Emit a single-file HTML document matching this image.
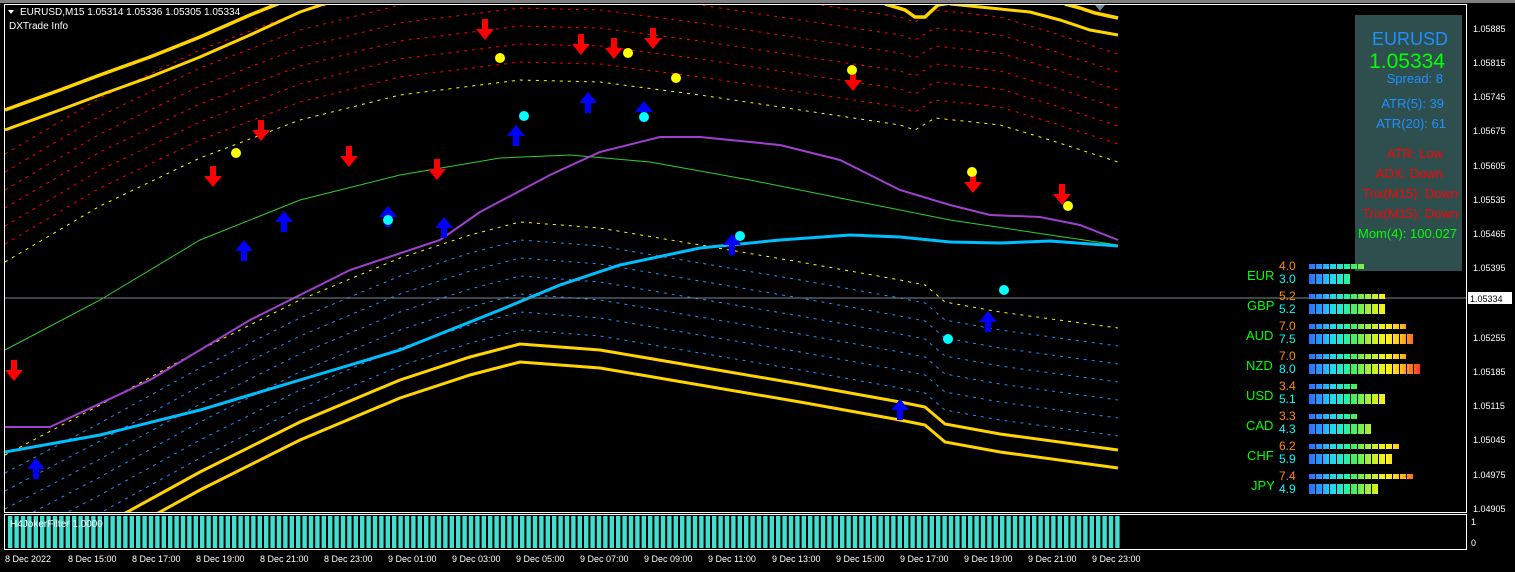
<!DOCTYPE html>
<html><head><meta charset="utf-8"><style>
html,body{margin:0;padding:0;background:#000;width:1515px;height:572px;overflow:hidden;font-family:"Liberation Sans",sans-serif}
svg{position:absolute;left:0;top:0}
</style></head><body>
<svg width="1515" height="572" viewBox="0 0 1515 572" xmlns="http://www.w3.org/2000/svg" font-family="Liberation Sans, sans-serif">
<defs>
<clipPath id="c"><rect x="5" y="5" width="1461" height="507"/></clipPath>
<path id="P" d="M5,262 L100,206 L200,158 L300,120 L400,95 L520,80 L600,82 L700,95 L800,110 L900,125 L915,130 L935,118 L1000,125 L1050,140 L1118,162"/>
<path id="Q" d="M5,455 L100,405 L200,350 L300,300 L400,258 L470,235 L520,222 L600,228 L700,245 L800,262 L900,280 L925,285 L945,302 L1000,312 L1118,328"/>
<path id="dn" d="M-3,-12 L3,-12 L3,-2 L9,-2 L0,9 L-9,-2 L-3,-2 Z" fill="#f00"/>
<path id="up" d="M-3,12 L3,12 L3,2 L9,2 L0,-9 L-9,2 L-3,2 Z" fill="#00f"/>
<pattern id="bars" x="8" y="0" width="6.4" height="40" patternUnits="userSpaceOnUse"><rect width="4.4" height="40" fill="#40e0d0"/></pattern>
<linearGradient id="sg" gradientUnits="userSpaceOnUse" x1="1309" y1="0" x2="1421" y2="0">
<stop offset="0" stop-color="#2a6fff"/><stop offset="0.12" stop-color="#2aa0ff"/><stop offset="0.19" stop-color="#22d0ff"/><stop offset="0.31" stop-color="#22f0c0"/><stop offset="0.4" stop-color="#40f060"/><stop offset="0.5" stop-color="#90f040"/><stop offset="0.62" stop-color="#e0f020"/><stop offset="0.7" stop-color="#fff020"/><stop offset="0.82" stop-color="#ffc020"/><stop offset="0.9" stop-color="#ff8020"/><stop offset="1" stop-color="#ff3020"/>
</linearGradient>
<pattern id="gapw" x="1309" y="0" width="7" height="600" patternUnits="userSpaceOnUse"><rect width="6" height="600" fill="#fff"/></pattern>
<mask id="m" maskUnits="userSpaceOnUse" x="1300" y="255" width="130" height="250"><rect x="1300" y="255" width="130" height="250" fill="url(#gapw)"/></mask>
</defs>
<rect width="1515" height="572" fill="#000"/>
<rect x="0" y="0" width="1515" height="3" fill="#808080"/>
<g clip-path="url(#c)" fill="none">
<g stroke="#f00" stroke-width="1" stroke-dasharray="3 5">
<use href="#P" transform="translate(0,-18)"/><use href="#P" transform="translate(0,-36)"/><use href="#P" transform="translate(0,-54)"/><use href="#P" transform="translate(0,-72)"/><use href="#P" transform="translate(0,-90)"/><use href="#P" transform="translate(0,-108)"/>
</g>
<use href="#P" stroke="#ff0" stroke-dasharray="3 5"/>
<polyline stroke="#ffd400" stroke-width="3.5" points="5,110 60,90 100,75 150,57 200,37 250,15 280,3"/>
<polyline stroke="#ffd400" stroke-width="3" points="5,130 60,110 100,95 150,77 200,57 250,35 300,12 330,2"/>
<polyline stroke="#ffd400" stroke-width="3.5" points="885,4 905,10 915,17 925,17 938,5 950,3"/>
<polyline stroke="#ffd400" stroke-width="3.5" points="1065,4 1080,8 1095,13 1118,18"/>
<polyline stroke="#ffd400" stroke-width="3" points="950,4 990,8 1030,12 1060,20 1090,30 1118,35"/>
<g stroke="#1e90ff" stroke-width="1" stroke-dasharray="3 5">
<use href="#Q" transform="translate(0,18)"/><use href="#Q" transform="translate(0,36)"/><use href="#Q" transform="translate(0,54)"/><use href="#Q" transform="translate(0,72)"/><use href="#Q" transform="translate(0,90)"/><use href="#Q" transform="translate(0,108)"/>
</g>
<use href="#Q" stroke="#ff0" stroke-dasharray="3 5"/>
<use href="#Q" stroke="#ffd400" stroke-width="3" transform="translate(0,122)"/>
<use href="#Q" stroke="#ffd400" stroke-width="3" transform="translate(0,140)"/>
<polyline stroke="#32cd32" stroke-width="1" points="5,350 100,300 200,240 300,200 400,175 500,158 570,155 650,162 750,180 850,200 950,220 1050,235 1118,245"/>
<polyline stroke="#a040d0" stroke-width="2" points="5,427 50,427 150,380 250,320 350,270 440,240 480,212 550,175 600,152 660,137 700,137 780,145 840,160 900,190 950,205 990,215 1040,217 1080,225 1118,240"/>
<polyline stroke="#00bfff" stroke-width="3" points="5,452 100,435 200,410 300,380 400,350 500,310 560,285 620,265 700,248 780,240 850,235 900,237 950,242 1000,243 1050,241 1118,246"/>
</g>
<line x1="5" y1="298" x2="1466" y2="298" stroke="#778899"/>
<g>
<use href="#dn" x="14" y="372"/><use href="#dn" x="213" y="178"/><use href="#dn" x="261" y="132"/><use href="#dn" x="349" y="158"/><use href="#dn" x="437" y="171"/><use href="#dn" x="485" y="31"/><use href="#dn" x="581" y="46"/><use href="#dn" x="614" y="50"/><use href="#dn" x="653" y="40"/><use href="#dn" x="853" y="82"/><use href="#dn" x="973" y="184"/><use href="#dn" x="1062" y="196"/>
<use href="#up" x="36" y="467"/><use href="#up" x="244" y="249"/><use href="#up" x="284" y="220"/><use href="#up" x="388" y="215"/><use href="#up" x="444" y="226"/><use href="#up" x="516" y="134"/><use href="#up" x="588" y="101"/><use href="#up" x="644" y="110"/><use href="#up" x="732" y="243"/><use href="#up" x="900" y="408"/><use href="#up" x="988" y="320"/>
</g>
<g fill="#ff0"><circle cx="236" cy="153" r="5"/><circle cx="500" cy="58" r="5"/><circle cx="628" cy="53" r="5"/><circle cx="676" cy="78" r="5"/><circle cx="852" cy="70" r="5"/><circle cx="972" cy="172" r="5"/><circle cx="1068" cy="206" r="5"/></g>
<g fill="#0ff"><circle cx="388" cy="220" r="5"/><circle cx="524" cy="116" r="5"/><circle cx="644" cy="117" r="5"/><circle cx="740" cy="236" r="5"/><circle cx="1004" cy="290" r="5"/><circle cx="948" cy="339" r="5"/></g>
<polygon points="1095,5 1105,5 1100,11" fill="#778899"/>
<rect x="4.5" y="4.5" width="1462" height="508" fill="none" stroke="#fff"/>
<rect x="4.5" y="514.5" width="1462" height="35" fill="none" stroke="#fff"/>
<rect x="8" y="516" width="1112" height="32" fill="url(#bars)"/>
<text x="10" y="527" font-size="10" fill="#fff">H4JokerFilter 1.0000</text>
<polygon points="8,10 14,10 11,14" fill="#fff"/>
<text x="20" y="15" font-size="10" fill="#fff">EURUSD,M15  1.05314 1.05336 1.05305 1.05334</text>
<text x="9" y="29" font-size="10" fill="#fff">DXTrade Info</text>
<rect x="1355" y="15" width="107" height="256" fill="#2f4f4f"/>
<g font-size="13" text-anchor="end">
<text x="1448" y="45" font-size="18" fill="#1e90ff">EURUSD</text>
<text x="1445" y="68" font-size="21" fill="#00ff00">1.05334</text>
<text x="1443" y="83" fill="#1e90ff">Spread: 8</text>
<text x="1444" y="108" fill="#1e90ff">ATR(5): 39</text>
<text x="1446" y="128" fill="#1e90ff">ATR(20): 61</text>
<text x="1443" y="158" fill="#ff0000">ATR: Low</text>
<text x="1443" y="178" fill="#ff0000">ADX: Down</text>
<text x="1458" y="198" fill="#ff0000">Trix(M15): Down</text>
<text x="1458" y="218" fill="#ff0000">Trix(M15): Down</text>
<text x="1457" y="238" fill="#00ff00">Mom(4): 100.027</text>
</g>
<g font-size="13">
<g fill="#00ff00">
<text x="1247" y="280">EUR</text><text x="1247" y="310">GBP</text><text x="1246" y="340">AUD</text><text x="1246" y="370">NZD</text><text x="1246" y="400">USD</text><text x="1246" y="430">CAD</text><text x="1247" y="460">CHF</text><text x="1251" y="490">JPY</text>
</g>
<g font-size="12">
<text x="1279" y="270" fill="#ff8c00">4.0</text><text x="1279" y="283" fill="#00ffff">3.0</text>
<text x="1279" y="300" fill="#ff8c00">5.2</text><text x="1279" y="313" fill="#00ffff">5.2</text>
<text x="1279" y="330" fill="#ff8c00">7.0</text><text x="1279" y="343" fill="#00ffff">7.5</text>
<text x="1279" y="360" fill="#ff8c00">7.0</text><text x="1279" y="373" fill="#00ffff">8.0</text>
<text x="1279" y="390" fill="#ff8c00">3.4</text><text x="1279" y="403" fill="#00ffff">5.1</text>
<text x="1279" y="420" fill="#ff8c00">3.3</text><text x="1279" y="433" fill="#00ffff">4.3</text>
<text x="1279" y="450" fill="#ff8c00">6.2</text><text x="1279" y="463" fill="#00ffff">5.9</text>
<text x="1279" y="480" fill="#ff8c00">7.4</text><text x="1279" y="493" fill="#00ffff">4.9</text>
</g>
</g>
<g fill="url(#sg)" mask="url(#m)">
<rect x="1309" y="264" width="56" height="5"/><rect x="1309" y="274" width="42" height="10"/>
<rect x="1309" y="294" width="77" height="5"/><rect x="1309" y="304" width="77" height="10"/>
<rect x="1309" y="324" width="98" height="5"/><rect x="1309" y="334" width="105" height="10"/>
<rect x="1309" y="354" width="98" height="5"/><rect x="1309" y="364" width="112" height="10"/>
<rect x="1309" y="384" width="49" height="5"/><rect x="1309" y="394" width="77" height="10"/>
<rect x="1309" y="414" width="49" height="5"/><rect x="1309" y="424" width="63" height="10"/>
<rect x="1309" y="444" width="91" height="5"/><rect x="1309" y="454" width="84" height="10"/>
<rect x="1309" y="474" width="105" height="5"/><rect x="1309" y="484" width="70" height="10"/>
</g>
<g font-size="9" fill="#fff">
<text x="1473" y="32">1.05885</text><text x="1473" y="66">1.05815</text><text x="1473" y="100">1.05745</text><text x="1473" y="134">1.05675</text><text x="1473" y="169">1.05605</text><text x="1473" y="203">1.05535</text><text x="1473" y="237">1.05465</text><text x="1473" y="271">1.05395</text><text x="1473" y="341">1.05255</text><text x="1473" y="375">1.05185</text><text x="1473" y="409">1.05115</text><text x="1473" y="443">1.05045</text><text x="1473" y="478">1.04975</text><text x="1473" y="512">1.04905</text>
<text x="1471" y="525">1</text><text x="1471" y="546">0</text>
</g>
<rect x="1468" y="292" width="44" height="12" fill="#fff"/>
<text x="1470" y="302" font-size="9" fill="#000">1.05334</text>
<g font-size="9" fill="#fff">
<text x="5" y="562">8 Dec 2022</text><text x="68" y="562">8 Dec 15:00</text><text x="132" y="562">8 Dec 17:00</text><text x="196" y="562">8 Dec 19:00</text><text x="260" y="562">8 Dec 21:00</text><text x="324" y="562">8 Dec 23:00</text><text x="388" y="562">9 Dec 01:00</text><text x="452" y="562">9 Dec 03:00</text><text x="516" y="562">9 Dec 05:00</text><text x="580" y="562">9 Dec 07:00</text><text x="644" y="562">9 Dec 09:00</text><text x="708" y="562">9 Dec 11:00</text><text x="772" y="562">9 Dec 13:00</text><text x="836" y="562">9 Dec 15:00</text><text x="900" y="562">9 Dec 17:00</text><text x="964" y="562">9 Dec 19:00</text><text x="1028" y="562">9 Dec 21:00</text><text x="1092" y="562">9 Dec 23:00</text>
</g>
</svg>
</body></html>
